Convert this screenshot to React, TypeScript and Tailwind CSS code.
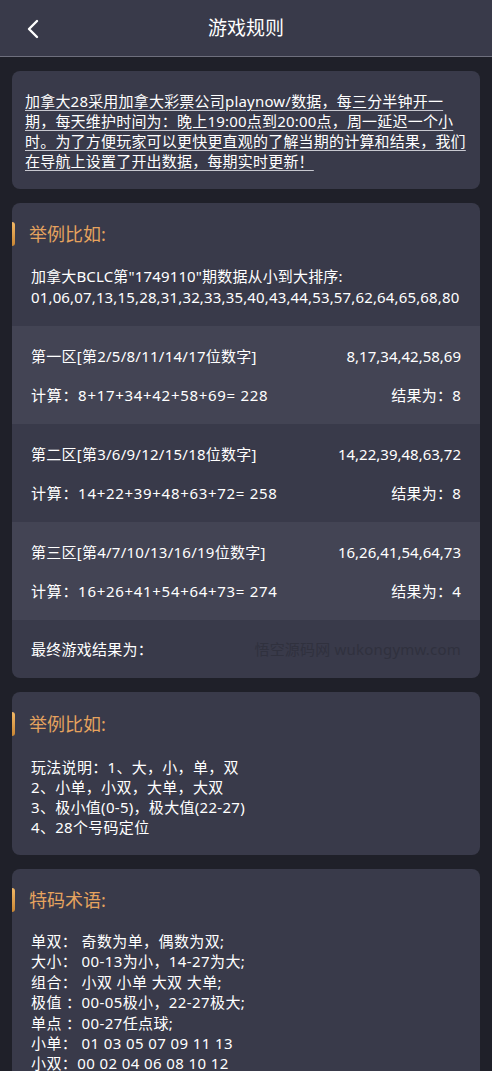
import React from "react";

const font = { fontFamily: '"Noto Sans", "Noto Sans CJK SC", sans-serif' };

function Heading({ children }: { children: React.ReactNode }) {
  return (
    <div className="flex items-center h-[24px]">
      <div className="w-[3px] h-[24px] rounded-r-sm bg-gradient-to-b from-[#f2b866] to-[#c98633]" />
      <div className="ml-[14px] text-[18px] leading-[24px] text-[#e6a35e]">{children}</div>
    </div>
  );
}

function ZoneRow({
  name,
  nums,
  calc,
  result,
  light,
}: {
  name: string;
  nums: string;
  calc: string;
  result: string;
  light: boolean;
}) {
  return (
    <div className={`px-[19px] pt-[20px] pb-[19px] ${light ? "bg-[#434454]" : "bg-[#393a4a]"}`}>
      <div className="flex justify-between text-[15px] leading-[20px]">
        <span className="tracking-[0.25px]">{name}</span>
        <span>{nums}</span>
      </div>
      <div className="flex justify-between text-[15px] leading-[20px] mt-[19px]">
        <span className="tracking-[0.7px]">{calc}</span>
        <span className="tracking-[0.25px]">{result}</span>
      </div>
    </div>
  );
}

export default function App() {
  return (
    <div className="min-h-[1071px] bg-[#1f2029] text-white" style={font}>
      <div className="relative h-[57px] bg-[#393a4a] border-b border-[#6e6f7d] flex items-center justify-center">
        <svg
          className="absolute left-[24px] top-[18px]"
          width="18"
          height="22"
          viewBox="0 0 18 22"
          fill="none"
        >
          <path d="M13 3 L5 11 L13 19" stroke="white" strokeWidth="2.4" strokeLinecap="round" strokeLinejoin="round" />
        </svg>
        <span className="text-[19px] leading-[24px]">游戏规则</span>
      </div>

      <div className="px-[12px] pt-[14px] pb-[20px] flex flex-col gap-[14px]">
        <div className="bg-[#393a4a] rounded-[8px] pl-[13px] pr-[12px] pt-[20px] pb-[18px]">
          <p className="text-[15px] leading-[20px] tracking-[0.2px] underline underline-offset-[3px] decoration-[#c8c8d0]">
            加拿大28采用加拿大彩票公司playnow/数据，每三分半钟开一
            <br />
            期，每天维护时间为：晚上19:00点到20:00点，周一延迟一个小
            <br />
            时。为了方便玩家可以更快更直观的了解当期的计算和结果，我们
            <br />
            在导航上设置了开出数据，每期实时更新！
          </p>
        </div>

        <div className="bg-[#393a4a] rounded-[8px] overflow-hidden pt-[19px]">
          <Heading>举例比如:</Heading>
          <div className="px-[19px] pt-[20px] pb-[18px] text-[15px] leading-[21px] tracking-[0.15px]">
            <div>加拿大BCLC第"1749110"期数据从小到大排序:</div>
            <div>01,06,07,13,15,28,31,32,33,35,40,43,44,53,57,62,64,65,68,80</div>
          </div>
          <ZoneRow
            light
            name="第一区[第2/5/8/11/14/17位数字]"
            nums="8,17,34,42,58,69"
            calc="计算：8+17+34+42+58+69= 228"
            result="结果为：8"
          />
          <ZoneRow
            light={false}
            name="第二区[第3/6/9/12/15/18位数字]"
            nums="14,22,39,48,63,72"
            calc="计算：14+22+39+48+63+72= 258"
            result="结果为：8"
          />
          <ZoneRow
            light
            name="第三区[第4/7/10/13/16/19位数字]"
            nums="16,26,41,54,64,73"
            calc="计算：16+26+41+54+64+73= 274"
            result="结果为：4"
          />
          <div className="px-[19px] py-[19px] flex justify-between text-[15px] leading-[20px] tracking-[0.25px]">
            <span>最终游戏结果为：</span>
            <span className="text-[#30313e] text-[15px] tracking-[0.2px]">悟空源码网 wukongymw.com</span>
          </div>
        </div>

        <div className="bg-[#393a4a] rounded-[8px] pt-[20px] pb-[18px]">
          <Heading>举例比如:</Heading>
          <div className="px-[19px] pt-[21px] text-[15px] leading-[20px] tracking-[0.3px]">
            <div>玩法说明：1、大，小，单，双</div>
            <div>2、小单，小双，大单，大双</div>
            <div>3、极小值(0-5)，极大值(22-27)</div>
            <div>4、28个号码定位</div>
          </div>
        </div>

        <div className="bg-[#393a4a] rounded-[8px] pt-[19px] pb-[18px]">
          <Heading>特码术语:</Heading>
          <div className="px-[19px] pt-[19px] text-[15px] leading-[20.4px] tracking-[0.4px]">
            <div>单双： 奇数为单，偶数为双;</div>
            <div>大小： 00-13为小，14-27为大;</div>
            <div>组合： 小双 小单 大双 大单;</div>
            <div>极值 ：00-05极小，22-27极大;</div>
            <div>单点 ：00-27任点球;</div>
            <div>小单： 01 03 05 07 09 11 13</div>
            <div>小双：00 02 04 06 08 10 12</div>
            <div>大单：15 17 19 21 23 25 27</div>
            <div>大双：14 16 18 20 22 24 26</div>
          </div>
        </div>
      </div>
    </div>
  );
}
